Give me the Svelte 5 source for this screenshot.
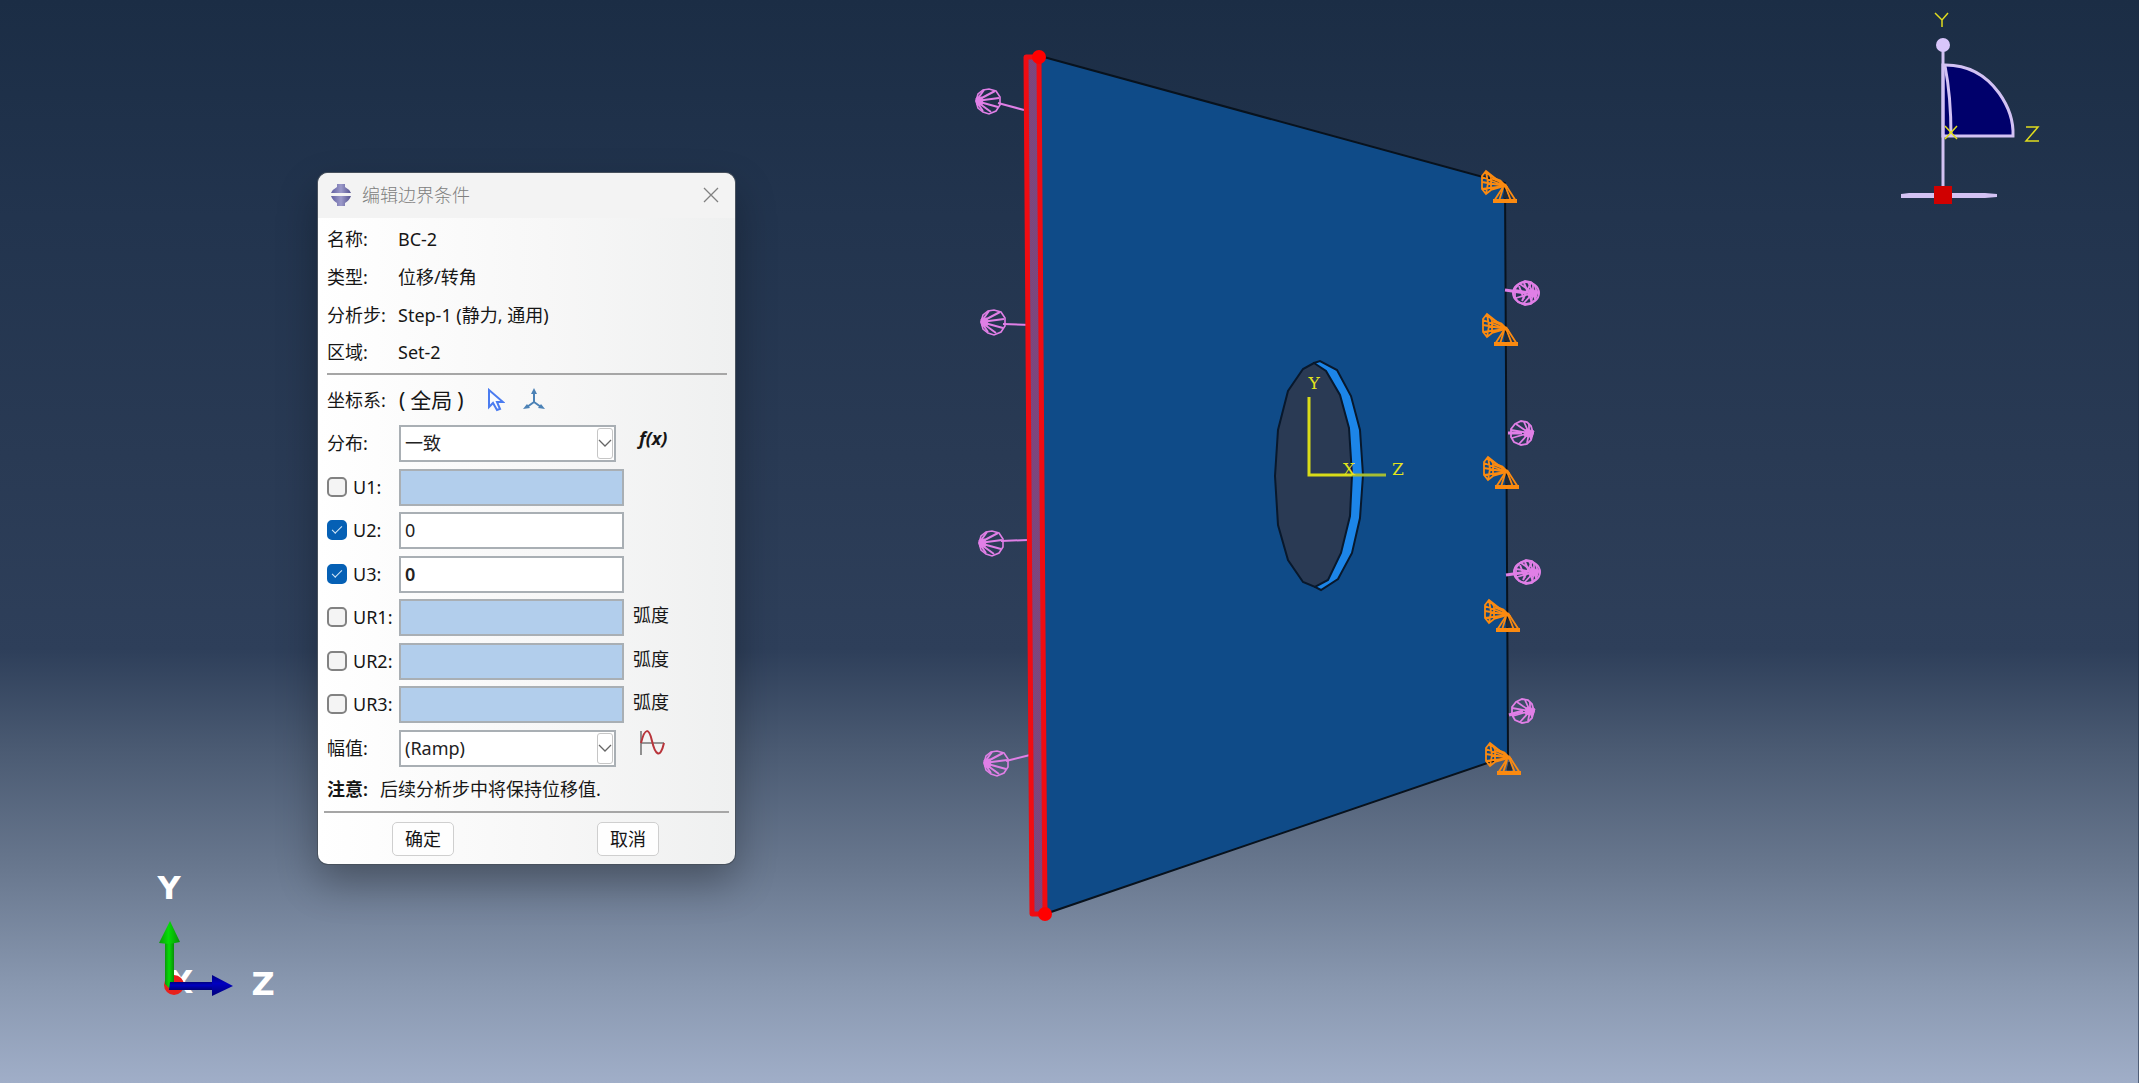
<script>
  const info = [
    ['名称:', 'BC-2'],
    ['类型:', '位移/转角'],
    ['分析步:', 'Step-1 (静力, 通用)'],
    ['区域:', 'Set-2']
  ];
  let dofs = $state([
    { id: 'U1', on: false, value: '', unit: '' },
    { id: 'U2', on: true, value: '0', unit: '' },
    { id: 'U3', on: true, value: '0', unit: '', bold: true },
    { id: 'UR1', on: false, value: '', unit: '弧度' },
    { id: 'UR2', on: false, value: '', unit: '弧度' },
    { id: 'UR3', on: false, value: '', unit: '弧度' }
  ]);
  const leftMarks = [
    { x: 988, y: 101, tx: 1024, ty: 110 },
    { x: 993, y: 322, tx: 1031, ty: 325 },
    { x: 991, y: 543, tx: 1028, ty: 540 },
    { x: 996, y: 763, tx: 1034, ty: 754 }
  ];
  const rightMarks = [
    { x: 1526, y: 293, tx: 1505, ty: 290, dense: true },
    { x: 1522, y: 433, tx: 1508, ty: 433, dense: false },
    { x: 1527, y: 572, tx: 1506, ty: 575, dense: true },
    { x: 1523, y: 711, tx: 1509, ty: 715, dense: false }
  ];
  const cones = [
    { x: 1504, y: 184 },
    { x: 1505, y: 327 },
    { x: 1506, y: 470 },
    { x: 1507, y: 613 },
    { x: 1508, y: 756 }
  ];
</script>

<main class="viewport">
  <svg class="scene" viewBox="0 0 2139 1083" preserveAspectRatio="none" aria-label="模型视图">
    <defs>
      <pattern id="weave" width="2" height="2" patternUnits="userSpaceOnUse">
        <rect width="2" height="2" fill="#6d4987" />
        <rect width="1" height="1" fill="#8b4474" />
        <rect x="1" y="1" width="1" height="1" fill="#8b4474" />
      </pattern>
      <linearGradient id="greenShaft"><stop offset="0" stop-color="#0a9a0a" /><stop offset=".45" stop-color="#06dc06" /><stop offset="1" stop-color="#088f08" /></linearGradient>
      <linearGradient id="blueShaft" x2="0" y2="1"><stop offset="0" stop-color="#000080" /><stop offset=".4" stop-color="#0000c0" /><stop offset="1" stop-color="#000078" /></linearGradient>
      <g id="fan" fill="none" stroke="#e07fe6" stroke-width="2">
        <path d="M-12 0L-10-7L-5-11L1-12L8-10L12-4L12 4L8 10L1 13L-5 11L-10 7Z" stroke-width="1.6" />
        <path d="M-12 0L-4-11M-12 0L7-10M-12 0L11-3M-12 0L10 6M-12 0L3 11M-12 0L-5 10" />
        <path d="M-12-3L-6-4L-5 3L-11 4Z" fill="#e07fe6" stroke-width="1" />
      </g>
      <g id="fanRight" fill="none" stroke="#e07fe6" stroke-width="1.8">
        <path d="M11 0L9-7L5-11L-1-12L-7-9L-11-4L-11 4L-8 9L-1 12L5 11L9 7Z" />
        <path d="M7 0L2-11M7 0L-6-9M7 0L-11-3M7 0L-10 5M7 0L-3 11M7 0L5 10M7 0L7-9M7 0L9 6" />
        <path d="M12-2L4-4L2 3L10 4Z" fill="#e07fe6" stroke-width="1" />
      </g>
      <g id="cone" fill="none" stroke="#fb8a10" stroke-width="1.8">
        <path d="M1 2L-18-13L-22-8L-22 5L-18 10L-13 6L1 2M1 2L-22-7M1 2L-22-2M1 2L-22 5M-18-13L-13-7L-13 6M-18-13L-16-1L-18 10" />
        <path d="M1 0L-10 17M1 0L12 17M-11 18H13M-11 16H13" />
        <path d="M-1 4L-5 17M2 4L7 17" />
        <path d="M1 6L4 14H-1Z" fill="#222b37" stroke="#222b37" stroke-width="1" />
        <path d="M-12-6L-4-3L3 4" stroke-width="3" />
      </g>
    </defs>

    <path d="M1040 56L1505 183L1508 756L1045 914Z" fill="#0f4b88" stroke="#08121d" stroke-width="2" />

    <g stroke="#08182c" stroke-width="2">
      <path d="M1314 363L1320 361L1337 370L1351 396L1360 430L1363 475L1360 518L1352 553L1338 579L1321 590L1315 587Z" fill="#1c85e8" />
      <path d="M1314 363L1326 371L1340 395L1349 428L1352 475L1350 516L1341 553L1328 580L1315 587L1303 582L1288 560L1278 525L1275 476L1278 430L1288 391L1303 369Z" fill="#2a3a54" />
    </g>
    <path d="M1309 397V475H1352" fill="none" stroke="#d9dc18" stroke-width="3" />
    <path d="M1352 475H1386" stroke="#a5bd33" stroke-width="3" />
    <g class="datum">
      <text x="1314" y="389">Y</text>
      <text x="1349" y="475">X</text>
      <text x="1398" y="475">Z</text>
    </g>

    {#each leftMarks as m}
      <path d="M{m.x + 10} {m.y + (m.ty > m.y ? 2 : -2)}L{m.tx} {m.ty}" stroke="#e07fe6" stroke-width="2" />
      <use href="#fan" x={m.x} y={m.y} />
    {/each}

    <path d="M1026 57H1039L1045 914H1032Z" fill="url(#weave)" stroke="#f00c12" stroke-width="5" stroke-linejoin="round" />
    <circle cx="1039" cy="57" r="7" fill="#f00" />
    <circle cx="1045" cy="914" r="7" fill="#f00" />

    {#each rightMarks as m}
      <path d="M{m.tx} {m.ty}L{m.x} {m.y}" stroke="#e07fe6" stroke-width="3" />
      <use href="#fanRight" x={m.x} y={m.y} />
      {#if m.dense}
        <ellipse cx={m.x} cy={m.y} rx="13" ry="11" fill="none" stroke="#e07fe6" stroke-width="2" />
        <path d="M{m.x - 7} {m.y - 7}l5 13M{m.x - 2} {m.y - 10}l8 19M{m.x + 5} {m.y - 10}l-9 18" stroke="#e07fe6" stroke-width="2" />
      {/if}
    {/each}
    {#each cones as c}
      <use href="#cone" x={c.x} y={c.y} />
    {/each}

    <g fill="none" stroke="#d3c2f3" stroke-width="3">
      <path d="M1943 65Q1978 64 1999 93Q2014 114 2013 136H1943Z" fill="#00006b" />
      <path d="M1943 50V190" />
      <path d="M1945 66Q1951 96 1951 136" />
    </g>
    <path d="M1901 194L1909 193H1985L1997 194V197L1985 198H1901Z" fill="#d3c2f3" />
    <circle cx="1943" cy="45" r="7" fill="#d9c6fb" />
    <rect x="1934" y="186" width="18" height="18" fill="#d00000" />
    <g fill="none" stroke="#e0dc1e" stroke-width="1.5">
      <path d="M1935 13L1942 20L1948 13M1942 20V27" />
      <path d="M1945 126L1957 139M1957 126L1945 139" />
      <path d="M2026 127H2038L2026 141H2039" />
    </g>

    <g class="triad">
      <text x="169" y="899">Y</text>
      <text x="181" y="993">X</text>
      <text x="263" y="995">Z</text>
    </g>
    <circle cx="174" cy="985" r="10" fill="#e8201c" />
    <path d="M165 940H174V985L169 988L165 984Z" fill="url(#greenShaft)" />
    <path d="M170 921L180 942Q170 945 159 943Z" fill="url(#greenShaft)" />
    <path d="M170 982H212V990H169Z" fill="url(#blueShaft)" />
    <path d="M212 975L233 986L212 996Z" fill="url(#blueShaft)" />
    <rect x="2138" width="1" height="1083" fill="#1c2c42" fill-opacity=".6" />
  </svg>

  <form class="dialog" aria-labelledby="title" onsubmit={(e) => e.preventDefault()}>
    <header>
      <svg width="22" height="22" viewBox="0 0 22 22" aria-hidden="true">
        <defs><linearGradient id="logoFill"><stop offset="0" stop-color="#5f5da0" /><stop offset=".5" stop-color="#9c9aca" /><stop offset="1" stop-color="#54528f" /></linearGradient></defs>
        <path d="M7 0H15V3Q19 5 21 9H1Q3 5 7 3ZM1 12H21Q19 17 15 19V22H7V19Q3 17 1 12Z" fill="url(#logoFill)" />
      </svg>
      <h1 id="title">编辑边界条件</h1>
      <button class="close" type="button" aria-label="关闭">
        <svg width="16" height="16" viewBox="0 0 16 16"><path d="M1 1L15 15M15 1L1 15" fill="none" stroke="#808080" stroke-width="1.3" /></svg>
      </button>
    </header>

    <div class="body">
      <dl>
        {#each info as [k, v]}
          <div class="info"><dt>{k}</dt><dd>{v}</dd></div>
        {/each}
      </dl>
      <hr />
      <div class="row csys">
        <span class="label">坐标系:</span>
        <span class="global"><span>(</span><span>全局</span><span>)</span></span>
        <button class="icon" type="button" aria-label="选择坐标系">
          <svg width="18" height="24" viewBox="0 0 18 24"><path d="M2 2V19L6 15L10 22L13 21L10 14H16Z" fill="#fafcff" stroke="#4b7cf0" stroke-width="2" /></svg>
        </button>
        <button class="icon" type="button" aria-label="创建坐标系">
          <svg width="22" height="24" viewBox="0 0 22 24"><path d="M11 4V14L4 19M11 14L18 19" fill="none" stroke="#4c82b6" stroke-width="2" /><path d="M11 0L14 6H8ZM0 21L4 16L7 20ZM22 21L18 16L15 20Z" fill="#4c82b6" /></svg>
        </button>
      </div>
      <div class="fields">
        <div class="row">
          <label class="label" for="dist">分布:</label>
          <span class="combo">
            <select id="dist"><option>一致</option></select>
            <span class="arrow"><svg width="14" height="10" viewBox="0 0 14 10"><path d="M1 2L7 8L13 2" fill="none" stroke="#666" stroke-width="1.3" /></svg></span>
          </span>
          <button class="icon side fx" type="button">f(x)</button>
        </div>
        {#each dofs as d}
          <div class="row">
            <label class="label check"><input type="checkbox" bind:checked={d.on} />{d.id}:</label>
            <input class="value" class:bold={d.bold} type="text" aria-label={d.id} bind:value={d.value} disabled={!d.on} />
            <span class="unit">{d.unit}</span>
          </div>
        {/each}
        <div class="row">
          <label class="label" for="amp">幅值:</label>
          <span class="combo">
            <select id="amp"><option>(Ramp)</option></select>
            <span class="arrow"><svg width="14" height="10" viewBox="0 0 14 10"><path d="M1 2L7 8L13 2" fill="none" stroke="#666" stroke-width="1.3" /></svg></span>
          </span>
          <button class="icon side" type="button" aria-label="创建幅值">
            <svg width="26" height="26" viewBox="0 0 26 26"><path d="M2 1V25M2 13H25" fill="none" stroke="#777" stroke-width="1.6" /><path d="M2 13C6-3 10-2 13 11S21 30 25 13" fill="none" stroke="#b8343a" stroke-width="2" /></svg>
          </button>
        </div>
      </div>
      <p><b>注意:</b>后续分析步中将保持位移值.</p>
    </div>
    <footer>
      <button type="submit">确定</button>
      <button type="button">取消</button>
    </footer>
  </form>
</main>

<style>
  :global(body) { margin: 0; }
  .viewport {
    position: relative;
    box-sizing: border-box;
    min-height: 100vh;
    padding: 173px 0 0 318px;
    overflow: hidden;
    background: linear-gradient(#1b2d45 0%, #22344e 20%, #293a54 42%, #2e3f5a 60%, #4a5a72 69%, #68778e 80%, #8998b0 91%, #a0aec8 100%);
    font: 18px/24px "Noto Sans", "Noto Sans CJK SC", sans-serif;
    color: #161616;
  }
  .scene { position: absolute; inset: 0; width: 100%; height: 100%; }
  .datum { font: 17px "DejaVu Serif", serif; fill: #e4e41c; text-anchor: middle; }
  .triad { font: bold 32px "DejaVu Sans", sans-serif; fill: #fff; text-anchor: middle; }

  .dialog {
    position: relative;
    width: 417px;
    border-radius: 10px;
    background: linear-gradient(90deg, #fff 0%, #f7f7f7 55%, #eff0f0 100%);
    box-shadow: 0 0 0 1px #48515d, 0 18px 40px rgb(0 0 0 / 30%);
  }
  header {
    display: flex;
    align-items: center;
    box-sizing: border-box;
    height: 45px;
    padding: 0 14px 2px 12px;
    border-radius: 10px 10px 0 0;
    background: #f3f3f3;
  }
  h1 { flex: 1; margin: 0 0 0 10px; font-size: 18px; font-weight: 300; color: #808080; }
  button { font: inherit; color: inherit; }
  .close, .icon { display: flex; padding: 0; border: 0; background: none; }
  .close { padding: 2px; }
  .body { padding: 2px 8px 0 9px; }
  dl, dd { margin: 0; }
  .info { display: grid; grid-template-columns: 71px 1fr; align-items: center; height: 38px; }
  .info:nth-child(n + 3) { height: 37px; }
  hr { height: 2px; margin: 3px 0 6px; border: 0; background: #a6a6a6; }
  .row { display: flex; align-items: center; height: 38px; }
  .fields .row { margin-bottom: 6px; }
  .fields .row:nth-child(even) { margin-bottom: 5px; }
  .label { flex: none; width: 72px; white-space: nowrap; }
  .csys { margin-bottom: 5px; }
  .global { display: flex; gap: 5px; width: 74px; font-size: 21px; }
  .csys .icon { margin: 0 0 0 14px; }
  .csys .icon + .icon { margin-left: 18px; }
  .combo { position: relative; width: 217px; }
  select, .value {
    box-sizing: border-box;
    display: block;
    height: 37px;
    margin: 0;
    padding: 0 4px;
    border: 2px solid #a9afb4;
    border-radius: 0;
    background: #fff;
    color: #222;
    font: inherit;
  }
  select { width: 100%; padding: 0 4px; appearance: none; }
  .arrow {
    position: absolute;
    top: 3px;
    right: 3px;
    display: grid;
    place-items: center;
    width: 14px;
    height: 29px;
    border: 1px solid #c6c6c6;
    border-radius: 3px;
    background: #fff;
    pointer-events: none;
  }
  .value { flex: none; width: 225px; }
  .value:disabled { background: #b2ceec; }
  .value.bold { font-weight: 600; }
  .unit { margin: 0 0 5px 9px; }
  .side { margin: 0 0 10px 23px; }
  .fx { font: italic bold 18px "Liberation Sans Narrow", "Open Sans", sans-serif; }
  .check { display: flex; align-items: center; gap: 6px; }
  .check input {
    appearance: none;
    display: grid;
    place-items: center;
    box-sizing: border-box;
    flex: none;
    width: 20px;
    height: 20px;
    margin: 0;
    border: 2px solid #828282;
    border-radius: 5px;
    background: #f4f4f4;
  }
  .check input:checked { border-color: #0560b5; background: #0560b5; }
  .check input:checked::after {
    content: "";
    width: 9px;
    height: 4px;
    margin-bottom: 3px;
    border: solid #d5e7f7;
    border-width: 0 0 1px 1px;
    transform: rotate(-45deg);
  }
  p { margin: 0; padding: 5px 0 10px; }
  b { margin-right: 12px; font-weight: 600; }
  footer {
    display: flex;
    justify-content: space-between;
    margin: 0 6px;
    padding: 9px 70px 8px 68px;
    border-top: 2px solid #a6a6a6;
  }
  footer button {
    width: 62px;
    height: 34px;
    padding: 0;
    border: 1px solid #cfcfcf;
    border-radius: 5px;
    background: #fefefe;
  }
</style>
